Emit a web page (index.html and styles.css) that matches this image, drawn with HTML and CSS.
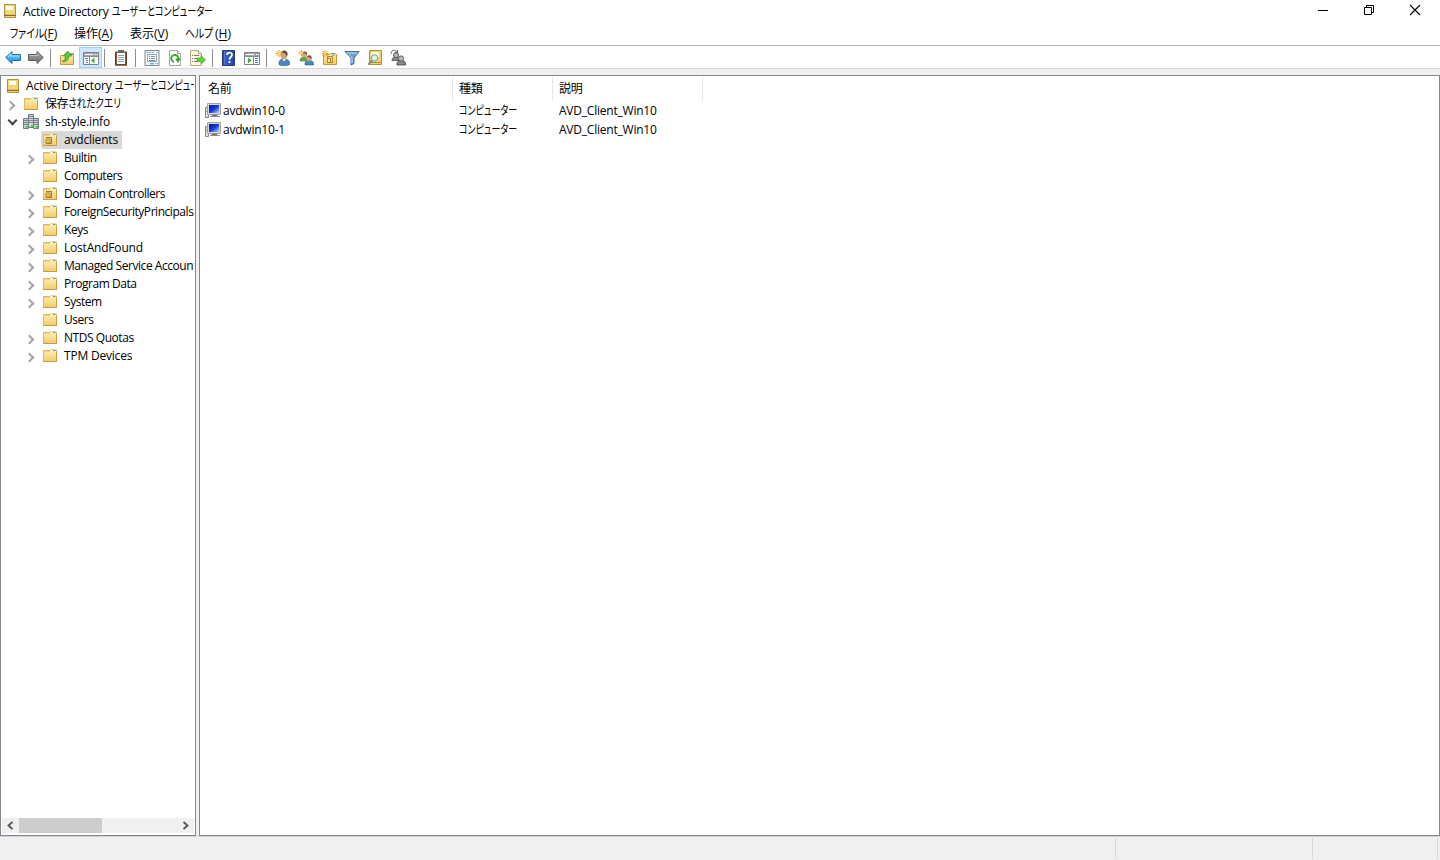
FILE: index.html
```html
<!DOCTYPE html>
<html lang="ja">
<head>
    <meta charset="UTF-8">
    <title>Active Directory ユーザーとコンピューター</title>
    <link rel="stylesheet" href="styles.css">
</head>
<body>

    <!-- icon definitions -->
    <svg class="defs">
        <defs>
            <linearGradient id="gold" x1="0" y1="0" x2="0" y2="1"><stop offset="0" stop-color="#ffebaf"/><stop offset="1" stop-color="#f1cc6c"/></linearGradient>
            <linearGradient id="blue" x1="0" y1="0" x2="0" y2="1"><stop offset="0" stop-color="#8ed8fb"/><stop offset="1" stop-color="#168bdc"/></linearGradient>
            <linearGradient id="gray" x1="0" y1="0" x2="0" y2="1"><stop offset="0" stop-color="#aaa"/><stop offset="1" stop-color="#6e6e6e"/></linearGradient>
            <linearGradient id="screen" x1="0" y1="0" x2="1" y2="1"><stop offset="0" stop-color="#0714a4"/><stop offset=".5" stop-color="#173ad6"/><stop offset="1" stop-color="#b8d0ff"/></linearGradient>
            <linearGradient id="help" x1="0" y1="0" x2="1" y2="0"><stop offset="0" stop-color="#283f9b"/><stop offset=".2" stop-color="#3b5fc9"/><stop offset="1" stop-color="#2444ad"/></linearGradient>
        </defs>
        <symbol id="i-book" viewBox="0 0 16 16">
            <path d="M2 1h12v14H2z" fill="#dcc262"/><path d="M2.500 1.500h11v13h-11z" fill="none" stroke="#b4933c"/>
            <path d="M3 2h10v9H3z" fill="#eed677"/><path d="M4 3h7v4H4z" fill="#fffdf0"/>
            <path d="M2 12.500h12" stroke="#8a681c"/><path d="M3 13.500h10" stroke="#e9d797"/>
        </symbol>
        <symbol id="i-folder" viewBox="0 1 16 16">
            <path d="M1.500 3.500h6l1.500-1h5l.5.5v11.500h-13z" fill="#f3d27a" stroke="#dcb863"/>
            <path d="M8.500 2.500h5.500v2H8z" fill="#fff7d8"/><path d="M11 3.500h2.500" stroke="#3c9be0"/>
            <path d="M2 5h6l1-1h5v10H2z" fill="url(#gold)"/><path d="M1 14.500h13.500V5" fill="none" stroke="#c79c43"/>
        </symbol>
        <symbol id="i-ou" viewBox="0 0 16 16">
            <use href="#i-folder"/><path d="M4 5.500h5.500v6H4" fill="none" stroke="#a57b16"/><path d="M4 7h4v4H4z" fill="#fff0b8" stroke="#a57b16"/><path d="M5 9h2" stroke="#a57b16"/>
        </symbol>
        <symbol id="i-domain" viewBox="0 0 16 16">
            <path d="M5.500.5h5v13h-5z" fill="#d7dbe0" stroke="#6c737b"/><path d="M.5 4.500h5v10h-5zM10.500 4.500h5v10h-5z" fill="#c5cbd1" stroke="#737b83"/>
            <path d="M6 2.500h4M6 4.500h4M6 6.500h4M6 8.500h4M1 6.500h4M1 8.500h4M1 10.500h4M11 6.500h4M11 8.500h4M11 10.500h4" stroke="#7d878f"/>
            <path d="M3 12h2v2H3zM8 11h2v2H8zM13 12h2v2h-2z" fill="#38d52c"/>
        </symbol>
        <symbol id="i-computer" viewBox="0 0 16 16">
            <path d="M.5 4.500h3v10h-3z" fill="#e1e1dc" stroke="#7f8580"/><path d="M1 8.500h2" stroke="#52b845"/>
            <path d="M2.500.5h13v11h-13z" fill="#d9d9d4" stroke="#a2a29c"/><path d="M4 2h10v8H4z" fill="url(#screen)"/>
            <path d="M7 12h5v1H7zM5 13.500h10" stroke="#8d8d88"/>
        </symbol>
        <symbol id="i-back" viewBox="0 0 16 16"><path d="M.7 7.500 7 1.500v3h8.500v6H7v3z" fill="url(#blue)" stroke="#1673b4"/><path d="M3 7 6 4v2h8.500" fill="none" stroke="#a7e4ff"/></symbol>
        <symbol id="i-forward" viewBox="0 0 16 16"><path d="M15.300 7.500 9 1.500v3H.5v6H9v3z" fill="url(#gray)" stroke="#5c5c5c"/><path d="M1.500 5.500H10V4" fill="none" stroke="#c4c4c4"/></symbol>
        <symbol id="i-up" viewBox="0 0 16 16">
            <path d="M1.500 5.500h7l1.500-2h4.500v11h-13z" fill="url(#gold)" stroke="#c79c43"/><path d="M11 4.500h3" stroke="#3c9be0"/>
            <path d="M3 11.500c2.500-.5 3.500-3 3.500-5.500H4.300L8.500 1l4 5H9.800c0 4-2.800 6-6.800 5.500z" fill="#5cc83a" stroke="#3d9427" stroke-width=".8"/>
        </symbol>
        <symbol id="i-tree" viewBox="0 0 16 16">
            <path d="M.5 2.500h15v12H.5z" fill="#fff" stroke="#7d8288"/><path d="M1 3h14v3H1z" fill="#a1a6ab"/><path d="M2 4.500h8M12 4.500h1M14 4.500h1" stroke="#fff"/>
            <path d="M6.500 6v8M1 6.500h14" stroke="#868c91"/><path d="M2 8.500h3M3 10.500h2M3 12.500h2" stroke="#3e79b8"/><path d="M11.500 7.500v6l-3.500-3z" fill="#36b52b"/>
        </symbol>
        <symbol id="i-clip" viewBox="0 0 16 16">
            <path d="M2 1.500h12v14H2z" fill="#8f5732"/><path d="M2.500 2v13h11V2" fill="none" stroke="#613a25"/><path d="M4 3h8v11H4z" fill="#f9fcff"/>
            <path d="M5 0h6v3H5z" fill="#686868"/><path d="M5 5.500h6M5 7.500h6M5 9.500h6M5 11.500h6" stroke="#8d9cab"/>
        </symbol>
        <symbol id="i-props" viewBox="0 0 16 16">
            <path d="M1 .5h14v15H1z" fill="#f7f9fb" stroke="#7e8790"/><path d="M2 2.500h8M12 2.500h2" stroke="#a2bdd4"/>
            <path d="M3.500 4.500h9v7h-9z" fill="#fff" stroke="#91a1af"/><path d="M5 6.500h1M7 6.500h4M5 8.500h1M7 8.500h4M5 10.500h6" stroke="#7793aa"/>
            <path d="M6 13h4v1.500H6z" fill="#32c5ef"/><path d="M11 13.500h3" stroke="#a2bdd4"/>
        </symbol>
        <symbol id="i-refresh" viewBox="0 0 16 16">
            <path d="M2.500.5h8l3 3v12h-11z" fill="#fffdf9" stroke="#aaa49b"/><path d="M10.500.5v3h3" fill="#e3e0d9" stroke="#aaa49b"/>
            <path d="M7 12A3.600 3.600 0 1 1 11.300 9.500" fill="none" stroke="#41ad38" stroke-width="2"/><path d="M8.200 8.500h5.300L11 13z" fill="#2e9a29"/>
        </symbol>
        <symbol id="i-export" viewBox="0 0 16 16">
            <path d="M.5.500h8l3 3v12H.5z" fill="#fff9dc" stroke="#b4a88a"/><path d="M8.500.5v3h3" fill="#fff" stroke="#b4a88a"/>
            <path d="M2 5.500h1M4 5.500h5M2 8.500h1M4 8.500h3M2 11.500h1M4 11.500h3" stroke="#75758a"/><path d="M7 8h4V5.500L15.500 10 11 14v-2.500H7z" fill="#67cf3b" stroke="#469f26" stroke-width=".7"/>
        </symbol>
        <symbol id="i-help" viewBox="0 0 16 16">
            <path d="M1.500.5h12v15h-12z" fill="url(#help)" stroke="#243777"/><path d="M3.500 1v14" stroke="#5876cf"/>
            <path d="M6 5c0-3.300 5-3.100 5-.3C11 7 8.500 7 8.500 9.500M8.500 11v2" fill="none" stroke="#fff" stroke-width="1.800"/>
        </symbol>
        <symbol id="i-action" viewBox="0 0 16 16">
            <path d="M.5 2.500h15v12H.5z" fill="#fff" stroke="#7d8288"/><path d="M1 3h14v3H1z" fill="#a1a6ab"/><path d="M2 4.500h8M12 4.500h1M14 4.500h1" stroke="#fff"/>
            <path d="M9.500 6v8M1 6.500h14" stroke="#868c91"/><path d="M11 8.500h3M11 10.500h3M11 12.500h3" stroke="#3e79b8"/><path d="M4 7.500v6l3.500-3z" fill="#36b52b"/>
        </symbol>
        <symbol id="i-star" viewBox="0 0 8 8"><path d="M4 0v7M.5 3.500h7M1.500 1l5 5M6.500 1l-5 5" stroke="#e79223" stroke-width=".9"/><circle cx="4" cy="3.500" r="1.200" fill="#ffe66b"/></symbol>
        <symbol id="i-user" viewBox="0 0 16 16">
            <path d="M4 14.500c-.5-3 1-5 3.500-5.500h3c3 .5 4.500 2.500 4 5.500-2 1.500-9 1.500-10.500 0z" fill="#4d87bd" stroke="#2d5f91" stroke-width=".7"/>
            <path d="M7.500 9 9 11.500l2-2.500z" fill="#fff"/><ellipse cx="8.800" cy="5" rx="3.300" ry="4.200" fill="#d7a16d"/><path d="M6.500 2c2-3 7-1.500 6 3L11.500 7c.3-3-1.500-4-5-5z" fill="#5c5140"/>
            <use href="#i-star" width="8" height="8"/>
        </symbol>
        <symbol id="i-group" viewBox="0 0 16 16">
            <path d="M2 11c0-3 1.500-4 4-4s4 1 4 4z" fill="#69a64b" stroke="#497c31" stroke-width=".6"/><circle cx="6.500" cy="4.800" r="2.500" fill="#d9a573"/><path d="M5 3c1-2.500 5-1.500 4 2-1-1.500-2-1.500-4-2z" fill="#6b563c"/>
            <path d="M7 15c-.5-3 1-4.500 4-4.500s5 1 4.500 4.500z" fill="#4d87bd" stroke="#2d5f91" stroke-width=".6"/><circle cx="11" cy="8.500" r="2.700" fill="#d9a573"/><path d="M9 6.500c2-2.500 5.500-.5 4.500 2.500-1-1.500-2.500-2-4.500-2.500z" fill="#5c5140"/>
            <use href="#i-star" width="7" height="7"/>
        </symbol>
        <symbol id="i-newou" viewBox="0 0 16 16">
            <path d="M2.500 4.500h6l1-1h5l1 1v10h-13z" fill="url(#gold)" stroke="#c4933a"/><path d="M11 5h3" stroke="#3c9be0"/>
            <path d="M6.500 6.500h5v6h-5z" fill="none" stroke="#b57e1a"/><path d="M6.500 8.500h3v4h-3z" fill="#fff0b8" stroke="#b57e1a"/><use href="#i-star" width="8" height="8"/>
        </symbol>
        <symbol id="i-filter" viewBox="0 0 16 16"><path d="M1 1.500h14L10 8v5.500L7 15V8z" fill="#6e9cc5" stroke="#426b90"/><path d="M3 3h10M5 5l3 2.500V13" fill="none" stroke="#c7e1f4"/></symbol>
        <symbol id="i-find" viewBox="0 0 16 16">
            <path d="M2.500.5h12v14h-12z" fill="#ecd475" stroke="#ae9138"/><path d="M4 2h8v5H4z" fill="#fff8cd"/><path d="M3 12.500h11" stroke="#b18f2d"/>
            <circle cx="7.500" cy="8" r="3.200" fill="#d9f2fc" stroke="#779bac"/><path d="m5.200 10.500-4 4" stroke="#8b8b83" stroke-width="1.800"/>
        </symbol>
        <symbol id="i-addgroup" viewBox="0 0 16 16">
            <path d="M2 10.500C2 7.500 3.500 7 6 7s4 1 4 3.500z" fill="#888" stroke="#505050" stroke-width=".8"/><circle cx="6" cy="5" r="2.500" fill="#bbb" stroke="#555" stroke-width=".9"/>
            <path d="M7 15c-.5-3 1-4.500 4-4.500s5 1 4.500 4.500z" fill="#888" stroke="#444" stroke-width=".8"/><circle cx="11" cy="8.500" r="2.600" fill="#bbb" stroke="#555" stroke-width=".9"/>
            <path d="M1 4C1 0 5-.5 7 2M7.500 0v3H5" fill="none" stroke="#666"/>
        </symbol>
    </svg>

    <div class="window">
        <div class="titlebar">
            <svg class="icon"><use href="#i-book"/></svg>
            <span class="title"><span class="en">Active Directory</span><span class="kana">ユーザーとコンピューター</span></span>
            <div class="controls">
                <svg width="12" height="12"><path d="M1 6.500h10" stroke="#000"/></svg>
                <svg width="12" height="12"><path d="M1.500 3.500h7v7h-7zM3.500 3.500v-2h7v7h-2" fill="none" stroke="#000"/></svg>
                <svg width="12" height="12"><path d="m1 1 10 10M11 1 1 11" stroke="#000" stroke-width="1.100"/></svg>
            </div>
        </div>

        <div class="menubar">
            <span class="menu file"><span class="kana">ファイル</span>(<u>F</u>)</span>
            <span class="menu action">操作(<u>A</u>)</span>
            <span class="menu view">表示(<u>V</u>)</span>
            <span class="menu help"><span class="kana">ヘルプ</span>(<u>H</u>)</span>
        </div>

        <div class="toolbar">
            <span class="tool"><svg class="icon"><use href="#i-back"/></svg></span>
            <span class="tool"><svg class="icon"><use href="#i-forward"/></svg></span>
            <span class="sep"></span>
            <span class="tool"><svg class="icon"><use href="#i-up"/></svg></span>
            <span class="tool active"><svg class="icon"><use href="#i-tree"/></svg></span>
            <span class="sep"></span>
            <span class="tool"><svg class="icon"><use href="#i-clip"/></svg></span>
            <span class="sep"></span>
            <span class="tool"><svg class="icon"><use href="#i-props"/></svg></span>
            <span class="tool"><svg class="icon"><use href="#i-refresh"/></svg></span>
            <span class="tool"><svg class="icon"><use href="#i-export"/></svg></span>
            <span class="sep"></span>
            <span class="tool"><svg class="icon"><use href="#i-help"/></svg></span>
            <span class="tool"><svg class="icon"><use href="#i-action"/></svg></span>
            <span class="sep"></span>
            <span class="tool"><svg class="icon"><use href="#i-user"/></svg></span>
            <span class="tool"><svg class="icon"><use href="#i-group"/></svg></span>
            <span class="tool"><svg class="icon"><use href="#i-newou"/></svg></span>
            <span class="tool"><svg class="icon"><use href="#i-filter"/></svg></span>
            <span class="tool"><svg class="icon"><use href="#i-find"/></svg></span>
            <span class="tool"><svg class="icon"><use href="#i-addgroup"/></svg></span>
        </div>

        <div class="main">
            <div class="tree">
                <div class="nodes">
                    <div class="node root"><svg class="icon"><use href="#i-book"/></svg><span class="label"><span class="en">Active Directory</span><span class="kana">ユーザーとコンピューター</span></span></div>
                    <div class="node top"><i class="arrow"></i><svg class="icon"><use href="#i-folder"/></svg><span class="label">保存<span class="kana">されたクエリ</span></span></div>
                    <div class="node top"><i class="arrow open"></i><svg class="icon"><use href="#i-domain"/></svg><span class="label loose">sh-style.info</span></div>
                    <div class="node selected"><i class="arrow none"></i><svg class="icon"><use href="#i-ou"/></svg><span class="label loose">avdclients</span></div>
                    <div class="node"><i class="arrow"></i><svg class="icon"><use href="#i-folder"/></svg><span class="label">Builtin</span></div>
                    <div class="node"><i class="arrow none"></i><svg class="icon"><use href="#i-folder"/></svg><span class="label">Computers</span></div>
                    <div class="node"><i class="arrow"></i><svg class="icon"><use href="#i-ou"/></svg><span class="label">Domain Controllers</span></div>
                    <div class="node"><i class="arrow"></i><svg class="icon"><use href="#i-folder"/></svg><span class="label">ForeignSecurityPrincipals</span></div>
                    <div class="node"><i class="arrow"></i><svg class="icon"><use href="#i-folder"/></svg><span class="label">Keys</span></div>
                    <div class="node"><i class="arrow"></i><svg class="icon"><use href="#i-folder"/></svg><span class="label loose">LostAndFound</span></div>
                    <div class="node"><i class="arrow"></i><svg class="icon"><use href="#i-folder"/></svg><span class="label">Managed Service Accounts</span></div>
                    <div class="node"><i class="arrow"></i><svg class="icon"><use href="#i-folder"/></svg><span class="label">Program Data</span></div>
                    <div class="node"><i class="arrow"></i><svg class="icon"><use href="#i-folder"/></svg><span class="label">System</span></div>
                    <div class="node"><i class="arrow none"></i><svg class="icon"><use href="#i-folder"/></svg><span class="label">Users</span></div>
                    <div class="node"><i class="arrow"></i><svg class="icon"><use href="#i-folder"/></svg><span class="label">NTDS Quotas</span></div>
                    <div class="node"><i class="arrow"></i><svg class="icon"><use href="#i-folder"/></svg><span class="label loose">TPM Devices</span></div>
                </div>
                <div class="scrollbar">
                    <svg width="17" height="15"><path d="M10.500 4 6.500 7.500l4 3.500" fill="none" stroke="#555" stroke-width="1.800"/></svg>
                    <div class="thumb"></div>
                    <svg width="17" height="15"><path d="m6.500 4 4 3.500-4 3.500" fill="none" stroke="#555" stroke-width="1.800"/></svg>
                </div>
            </div>

            <div class="list">
                <div class="row head"><span>名前</span><span>種類</span><span>説明</span></div>
                <div class="row"><span><svg class="icon"><use href="#i-computer"/></svg>avdwin10-0</span><span><span class="kana">コンピューター</span></span><span>AVD_Client_Win10</span></div>
                <div class="row"><span><svg class="icon"><use href="#i-computer"/></svg>avdwin10-1</span><span><span class="kana">コンピューター</span></span><span>AVD_Client_Win10</span></div>
            </div>
        </div>

        <div class="statusbar"><span></span><span></span><span></span></div>
    </div>

</body>
</html>
```
FILE: styles.css
```css
* {
    box-sizing: border-box;
}
body {
    margin: 0;
    font-family: "Open Sans", "Noto Sans CJK JP", sans-serif;
    font-size: 12px;
    line-height: 18px;
    color: #000;
    background: #fff;
    overflow: hidden;
}
.defs {
    position: absolute;
    width: 0;
    height: 0;
}
.icon {
    width: 16px;
    height: 16px;
    flex: none;
    display: block;
}
.window {
    height: 860px;
    display: flex;
    flex-direction: column;
}
.kana {
    display: inline-block;
    transform: scaleX(0.75);
    transform-origin: left;
    white-space: nowrap;
    letter-spacing: 0;
    font-feature-settings: "palt";
}
.en {
    display: inline-block;
    width: 89px;
    white-space: nowrap;
    letter-spacing: -0.15px;
}
.titlebar {
    height: 23px;
    display: flex;
    padding: 3px 19px 0 2px;
}
.title {
    padding-left: 5px;
    flex: 1;
}
.controls {
    display: flex;
    gap: 34px;
    padding-top: 1px;
}
.menubar {
    height: 22px;
    display: flex;
    padding: 2px 0 0 10px;
}
.menu {
    display: flex;
    white-space: nowrap;
}
.menu .kana {
    transform: scaleX(0.82);
}
.menu u {
    text-underline-offset: 2px;
}
.file {
    width: 64px;
}
.file .kana {
    width: 34px;
}
.action {
    width: 56px;
}
.view {
    width: 55px;
}
.help .kana {
    width: 30px;
}
.toolbar {
    height: 24px;
    display: flex;
    padding: 1px 2px;
    border-top: 1px solid #b0b0b5;
    border-bottom: 1px solid #d9d9d9;
}
.tool {
    width: 23px;
    height: 21px;
    padding: 3px 0 0 3px;
}
.tool.active {
    background: #cce8ff;
    border: 1px solid #99d1ff;
    padding: 2px 0 0 3px;
}
.sep {
    width: 1px;
    height: 18px;
    margin: 2px 5px 0 2px;
    background: #8d8d8d;
}
.main {
    height: 767px;
    padding-top: 6px;
    display: flex;
    gap: 3px;
    background: #f0f0f0;
}
.tree,
.list {
    border: 1px solid #828790;
    background: #fff;
}
.tree {
    width: 196px;
    display: flex;
    flex-direction: column;
    padding: 1px 1px 2px;
}
.nodes {
    flex: 1;
    overflow: hidden;
}
.node {
    height: 18px;
    display: flex;
    align-items: center;
    padding-left: 22px;
    white-space: nowrap;
}
.node.top,
.node.root {
    padding-left: 3px;
}
.label {
    padding: 0 4px 0 3px;
    margin-left: 3px;
    min-width: 0;
    overflow: hidden;
    letter-spacing: -0.45px;
}
.label.loose {
    letter-spacing: -0.2px;
}
.root .label {
    padding: 0 0 0 2px;
}
.top .label {
    overflow: visible;
}
.top .kana {
    transform: scaleX(0.8);
}
.selected .label {
    background: #d9d9d9;
}
.selected .icon {
    background: #d9d9d9;
    box-shadow: 3px 0 #d9d9d9, 0 1px #d9d9d9, 0 -1px #d9d9d9, -1px 0 #d9d9d9, 3px 1px #d9d9d9, 3px -1px #d9d9d9;
}
.arrow {
    width: 7px;
    height: 7px;
    margin: 2px 9px 0 2px;
    flex: none;
    border: solid #a6a6a6;
    border-width: 2px 2px 0 0;
    transform: rotate(45deg);
}
.arrow.open {
    border-color: #404040;
    transform: translate(2px, -3px) rotate(135deg);
}
.arrow.none {
    visibility: hidden;
}
.scrollbar {
    height: 15px;
    display: flex;
    background: #f0f0f0;
}
.thumb {
    width: 83px;
    margin-right: auto;
    background: #cdcdcd;
}
.list {
    flex: 1;
    padding-top: 1px;
}
.row {
    height: 19px;
    display: grid;
    grid-template-columns: 253px 100px 150px;
    letter-spacing: -0.22px;
}
.row > span {
    display: flex;
    align-items: center;
    padding-left: 6px;
    white-space: nowrap;
}
.row > span:first-child {
    padding-left: 5px;
    gap: 2px;
}
.row.head {
    height: 24px;
}
.head > span {
    border-right: 1px solid #e5e5e5;
}
.row.head > span:first-child {
    padding-left: 8px;
}
.statusbar {
    height: 24px;
    display: flex;
    padding: 1px 0;
    background: #f0f0f0;
    border-top: 1px solid #d0d3d6;
}
.statusbar span {
    border-right: 1px solid #d7d7d7;
    width: 1116px;
}
.statusbar span:nth-child(2) {
    width: 197px;
}
.statusbar span:nth-child(3) {
    width: 125px;
}
```
